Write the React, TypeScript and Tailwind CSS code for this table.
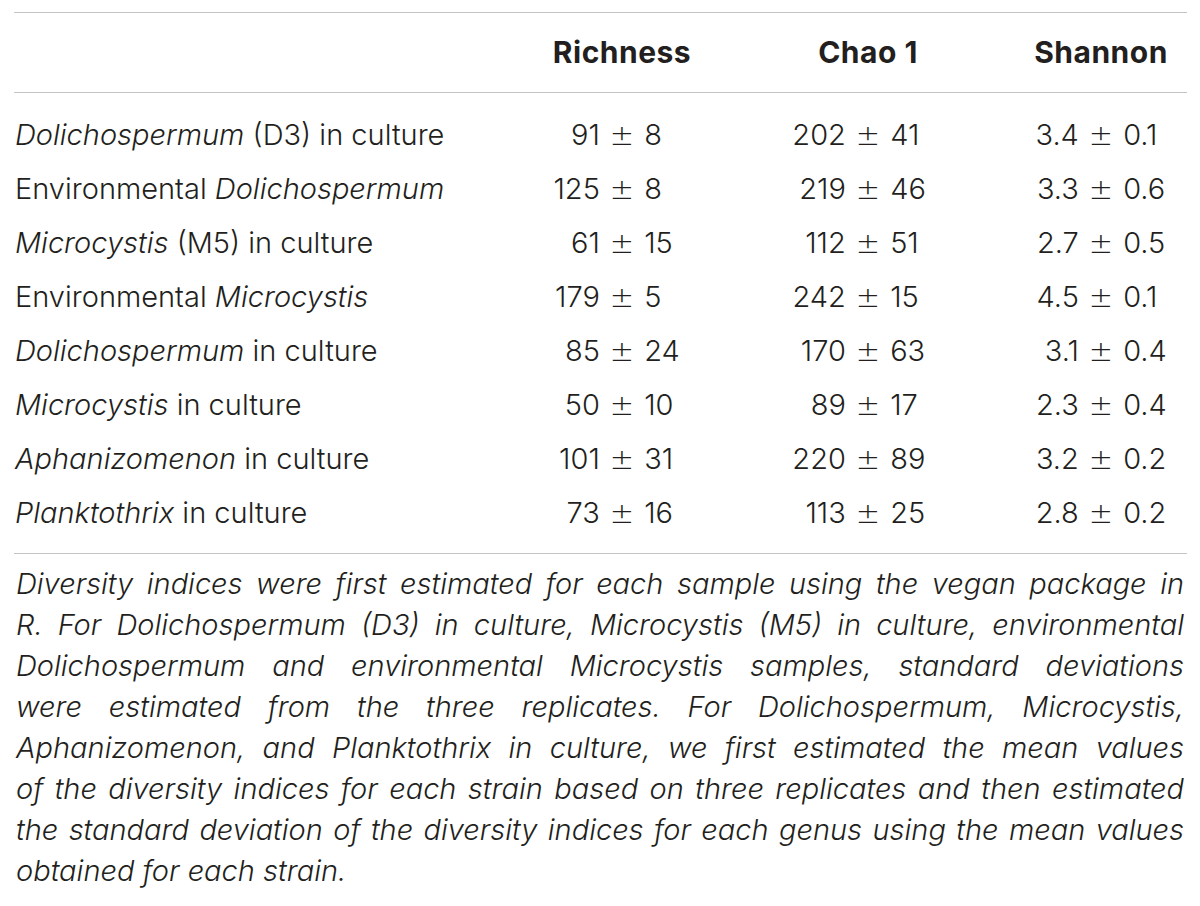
import type { ReactNode } from 'react';

type Row = {
  label: ReactNode;
  richness: [string, string];
  chao: [string, string];
  shannon: [string, string];
};

const ROWS: Row[] = [
  {
    label: (
      <>
        <i>Dolichospermum</i> (D3) in culture
      </>
    ),
    richness: ['91', '8'],
    chao: ['202', '41'],
    shannon: ['3.4', '0.1'],
  },
  {
    label: (
      <>
        Environmental <i>Dolichospermum</i>
      </>
    ),
    richness: ['125', '8'],
    chao: ['219', '46'],
    shannon: ['3.3', '0.6'],
  },
  {
    label: (
      <>
        <i>Microcystis</i> (M5) in culture
      </>
    ),
    richness: ['61', '15'],
    chao: ['112', '51'],
    shannon: ['2.7', '0.5'],
  },
  {
    label: (
      <>
        Environmental <i>Microcystis</i>
      </>
    ),
    richness: ['179', '5'],
    chao: ['242', '15'],
    shannon: ['4.5', '0.1'],
  },
  {
    label: (
      <>
        <i>Dolichospermum</i> in culture
      </>
    ),
    richness: ['85', '24'],
    chao: ['170', '63'],
    shannon: ['3.1', '0.4'],
  },
  {
    label: (
      <>
        <i>Microcystis</i> in culture
      </>
    ),
    richness: ['50', '10'],
    chao: ['89', '17'],
    shannon: ['2.3', '0.4'],
  },
  {
    label: (
      <>
        <i>Aphanizomenon</i> in culture
      </>
    ),
    richness: ['101', '31'],
    chao: ['220', '89'],
    shannon: ['3.2', '0.2'],
  },
  {
    label: (
      <>
        <i>Planktothrix</i> in culture
      </>
    ),
    richness: ['73', '16'],
    chao: ['113', '25'],
    shannon: ['2.8', '0.2'],
  },
];

// caption lines broken where the printed table breaks them
const CAPTION = [
  'Diversity indices were first estimated for each sample using the vegan package in',
  'R. For Dolichospermum (D3) in culture, Microcystis (M5) in culture, environmental',
  'Dolichospermum and environmental Microcystis samples, standard deviations',
  'were estimated from the three replicates. For Dolichospermum, Microcystis,',
  'Aphanizomenon, and Planktothrix in culture, we first estimated the mean values',
  'of the diversity indices for each strain based on three replicates and then estimated',
  'the standard deviation of the diversity indices for each genus using the mean values',
];

const gridCols = 'grid grid-cols-[496px_224px_268px_185px]';

function PlusMinus({ value }: { value: [string, string] }) {
  return (
    <div className="grid grid-cols-[1fr_auto_1fr] gap-x-[10px]">
      <span className="text-right">{value[0]}</span>
      <span className="font-['DejaVu_Sans'] font-extralight">±</span>
      <span className="text-left">{value[1]}</span>
    </div>
  );
}

export default function App() {
  return (
    <div className="min-h-[906px] bg-white pt-[12px] font-['Inter','Liberation_Sans',sans-serif] text-[#231f20]">
      <div className="mx-[14px] w-[1173px]">
        <div className="h-px bg-[#c4c4c4]" />

        <div
          className={`${gridCols} h-[79px] items-center text-[30px] font-bold leading-[79px] tracking-[0.5px]`}
        >
          <div />
          <div className="text-center">Richness</div>
          <div className="text-center">Chao 1</div>
          <div className="pl-[13px] text-center">Shannon</div>
        </div>

        <div className="h-px bg-[#c4c4c4]" />

        <div className="pb-[13px] pt-[15px] text-[29px] font-light">
          {ROWS.map((r, i) => (
            <div key={i} className={`${gridCols} h-[54px] leading-[54px]`}>
              <div className="whitespace-nowrap pl-[1px]">{r.label}</div>
              <PlusMinus value={r.richness} />
              <PlusMinus value={r.chao} />
              <div className="pl-[13px]">
                <PlusMinus value={r.shannon} />
              </div>
            </div>
          ))}
        </div>

        <div className="h-px bg-[#c4c4c4]" />

        <div className="pt-[9px] text-[29px] font-light italic leading-[41px]">
          {CAPTION.map((line, i) => (
            <div
              key={i}
              className="w-[1170px] whitespace-nowrap pl-[2px] text-justify [text-align-last:justify]"
            >
              {line}
            </div>
          ))}
          <div className="pl-[2px]">obtained for each strain.</div>
        </div>
      </div>
    </div>
  );
}
